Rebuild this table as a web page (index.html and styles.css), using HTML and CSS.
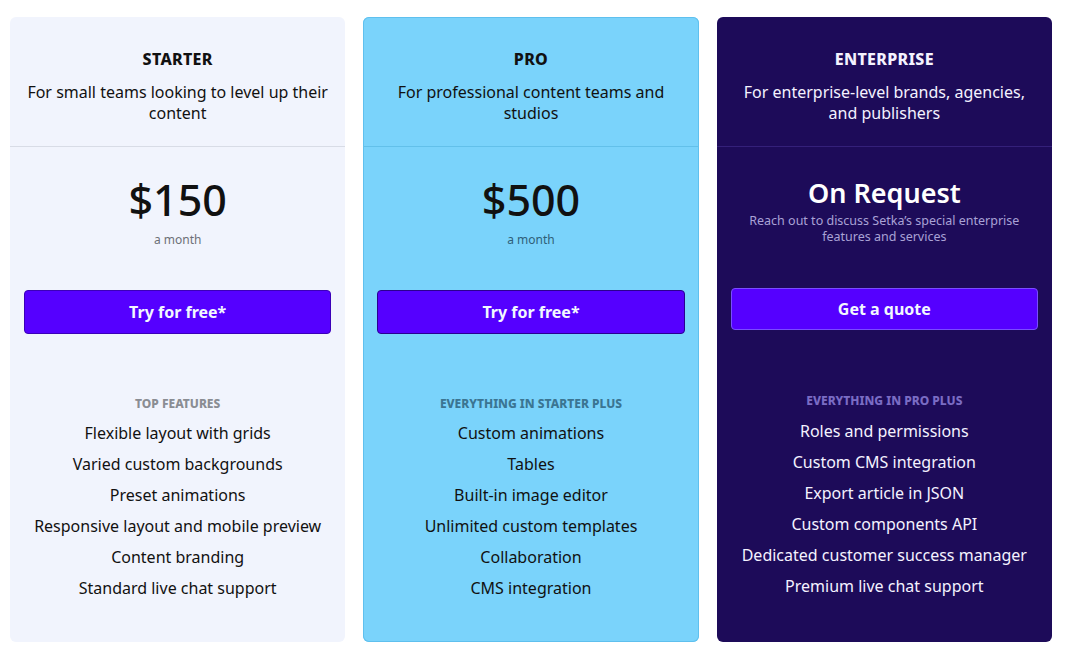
FILE: index.html
```html
<!DOCTYPE html>
<html>
<head>
<meta charset="utf-8">
<link rel="stylesheet" href="styles.css">
</head>
<body>
<div class="plans">
  <div class="card starter">
    <div class="head">
      <div class="name">STARTER</div>
      <div class="desc">For small teams looking to level up their content</div>
    </div>
    <div class="body">
      <div class="price">$150</div>
      <div class="period">a month</div>
      <button class="btn">Try for free*</button>
      <div class="label">TOP FEATURES</div>
      <ul class="features">
        <li>Flexible layout with grids</li>
        <li>Varied custom backgrounds</li>
        <li>Preset animations</li>
        <li>Responsive layout and mobile preview</li>
        <li>Content branding</li>
        <li>Standard live chat support</li>
      </ul>
    </div>
  </div>
  <div class="card pro">
    <div class="head">
      <div class="name">PRO</div>
      <div class="desc">For professional content teams and studios</div>
    </div>
    <div class="body">
      <div class="price">$500</div>
      <div class="period">a month</div>
      <button class="btn">Try for free*</button>
      <div class="label">EVERYTHING IN STARTER PLUS</div>
      <ul class="features">
        <li>Custom animations</li>
        <li>Tables</li>
        <li>Built-in image editor</li>
        <li>Unlimited custom templates</li>
        <li>Collaboration</li>
        <li>CMS integration</li>
      </ul>
    </div>
  </div>
  <div class="card ent">
    <div class="head">
      <div class="name">ENTERPRISE</div>
      <div class="desc">For enterprise-level brands, agencies, and publishers</div>
    </div>
    <div class="body">
      <div class="request">On Request</div>
      <div class="req-note">Reach out to discuss Setka’s special enterprise features and services</div>
      <button class="btn">Get a quote</button>
      <div class="label">EVERYTHING IN PRO PLUS</div>
      <ul class="features">
        <li>Roles and permissions</li>
        <li>Custom CMS integration</li>
        <li>Export article in JSON</li>
        <li>Custom components API</li>
        <li>Dedicated customer success manager</li>
        <li>Premium live chat support</li>
      </ul>
    </div>
  </div>
</div>
</body>
</html>
```

FILE: styles.css
```css
* { box-sizing: border-box; }
html, body { margin: 0; padding: 0; background: #ffffff; }
body {
  font-family: "Noto Sans", "Liberation Sans", sans-serif;
  color: #111;
}
.plans {
  display: grid;
  grid-template-columns: 1fr 1fr 1fr;
  column-gap: 18px;
  padding: 17px 18px 0 10px;
}
.card {
  height: 625px;
  border-radius: 6px;
  display: flex;
  flex-direction: column;
  text-align: center;
}
.starter { background: #f1f4fd; }
.pro { background: #7ad3fb; box-shadow: inset 0 0 0 1px #5fc0ee; }
.ent { background: #1d0b59; color: #f4f2ff; }

.head {
  padding: 33px 12px 22px;
  border-bottom: 1px solid #d8dce6;
}
.pro .head { border-bottom-color: #62c0ea; }
.ent .head { border-bottom-color: #34207a; }
.name {
  font-weight: 800;
  font-size: 16px;
  letter-spacing: 0.3px;
  line-height: 18px;
}
.desc {
  margin-top: 14px;
  font-size: 16px;
  line-height: 21px;
}
.pro .desc { padding: 0 14px; }
.body {
  padding: 0 14px;
  display: flex;
  flex-direction: column;
  align-items: stretch;
}
.price {
  margin-top: 28px;
  font-size: 43px;
  line-height: 50px;
  font-weight: 500;
}
.period {
  margin-top: 7px;
  font-size: 12px;
  line-height: 16px;
  color: #6d7077;
}
.pro .period { color: #2f5f78; }
.request {
  margin-top: 30px;
  font-size: 27px;
  line-height: 32px;
  font-weight: 600;
  color: #fff;
}
.req-note {
  margin-top: 4px;
  font-size: 12.5px;
  line-height: 16px;
  color: #a9a2d6;
  padding: 0 14px;
}
.btn {
  margin-top: 42px;
  height: 44px;
  border: 1px solid #3b00b8;
  background: #5500ff;
  color: #f2f8ff;
  border-radius: 4px;
  font-family: inherit;
  font-size: 16px;
  font-weight: 700;
}
.pro .btn { border-color: #2a0090; }
.ent .btn { margin-top: 43px; border-color: #7a4dff; height: 42px; }
.label {
  margin-top: 62px;
  font-size: 12px;
  line-height: 16px;
  font-weight: 800;
  color: #8a8d93;
}
.pro .label { color: #3b7592; }
.ent .label { margin-top: 63px; color: #7a6cc4; }
.features {
  list-style: none;
  margin: 6px 0 0;
  padding: 0;
}
.ent .features { margin-top: 7px; }
.features li {
  font-size: 16px;
  line-height: 31px;
}
```
